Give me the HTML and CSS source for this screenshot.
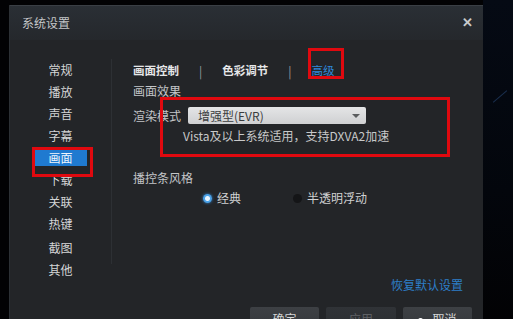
FILE: index.html
```html
<!DOCTYPE html>
<html lang="zh-CN">
<head>
  <meta charset="UTF-8" />
  <meta name="viewport" content="width=device-width, initial-scale=1.0"/>
  <title>系统设置</title>
  <link rel="stylesheet" href="styles.css">
</head>
<body>
  <div class="screen">
    <div class="dialog">
      <div class="titlebar">
        <span class="title">系统设置</span>
        <span class="close">&#x2715;</span>
      </div>
      <div class="main">
        <ul class="sidebar">
          <li>常规</li>
          <li>播放</li>
          <li>声音</li>
          <li>字幕</li>
          <li class="active"><span>画面</span></li>
          <li>下载</li>
          <li>关联</li>
          <li>热键</li>
          <li class="gap">截图</li>
          <li>其他</li>
        </ul>
        <div class="content">
          <div class="tabs">
            <span class="tab">画面控制</span>
            <span class="sep">|</span>
            <span class="tab">色彩调节</span>
            <span class="sep">|</span>
            <span class="tab current">高级</span>
          </div>
          <div class="section">画面效果</div>
          <div class="field">
            <span class="label">渲染模式</span>
            <div class="select">
              <span>增强型(EVR)</span>
              <span class="arrow"></span>
            </div>
          </div>
          <div class="hint">Vista及以上系统适用，支持DXVA2加速</div>
          <div class="section bar-style">播控条风格</div>
          <div class="radios">
            <label class="radio checked"><i></i>经典</label>
            <label class="radio"><i></i>半透明浮动</label>
          </div>
          <div class="spacer"></div>
          <a class="reset">恢复默认设置</a>
          <div class="buttons">
            <button>确定</button>
            <button class="disabled">应用</button>
            <button class="cancel"><b></b>取消</button>
          </div>
        </div>
      </div>
    </div>
    <div class="backdrop"><span class="streak"></span></div>

    <!-- red annotation frames drawn over the screenshot -->
    <div class="mark mark-tab"></div>
    <div class="mark mark-nav"></div>
    <div class="mark mark-render"></div>
  </div>
</body>
</html>
```

FILE: styles.css
```css
body {
  margin: 0;
  background-color: #000;
  font-family: "Noto Sans CJK SC", "Noto Sans", sans-serif;
  font-size: 12px;
  color: #cfd0d1;
  overflow: hidden;
}

.screen {
  position: relative;
  display: flex;
  height: 319px;
  overflow: hidden;
  background-color: #020204;
}

.dialog {
  width: 473px;
  margin: 5px 0 0 10px;
  flex-shrink: 0;
  display: flex;
  flex-direction: column;
  background-color: #232528;
  border-top: 1px solid #3a3f45;
  box-shadow: -1px 0 0 #2c3035, 1px 0 0 #2c3035;
}

.backdrop {
  position: relative;
  flex: 1;
  background: linear-gradient(180deg, #050a14 0%, #03060c 60%, #020204 100%);
}

.streak {
  position: absolute;
  left: 8px;
  top: 96px;
  width: 18px;
  height: 1px;
  background-color: #1a2f4e;
  transform: rotate(-40deg);
}

.titlebar {
  flex-shrink: 0;
  height: 34px;
  display: flex;
  align-items: center;
  justify-content: space-between;
  padding: 0 10px 0 12px;
  background: linear-gradient(180deg, #2a2f35 0%, #25282c 100%);
}

.title {
  color: #c4c6c8;
  font-size: 12px;
  margin-top: -2px;
}

.close {
  color: #c8cacc;
  font-size: 13px;
  font-weight: bold;
  margin-top: -4px;
}

.main {
  flex: 1;
  min-height: 0;
  display: flex;
  align-items: flex-start;
}

.sidebar {
  flex-shrink: 0;
  list-style: none;
  margin: 19px 0 0;
  padding: 0;
  width: 101px;
  height: 205px;
  border-right: 1px solid #2d3034;
}

.sidebar li {
  height: 22px;
  line-height: 22px;
  text-align: center;
  color: #d4d5d6;
}

.sidebar li.gap {
  margin-top: 2px;
}

.sidebar li.active span {
  display: inline-block;
  width: 52px;
  height: 16px;
  line-height: 16px;
  margin-top: 3px;
  background-color: #1f7ad0;
  color: #eef5fc;
  vertical-align: top;
}

.content {
  flex: 1;
  display: flex;
  flex-direction: column;
  padding: 20px 11px 0 21px;
}

.tabs {
  display: flex;
  align-items: center;
  height: 20px;
}

.tab {
  color: #e6e7e8;
  font-weight: bold;
  font-size: 11.5px;
}

.tab.current {
  color: #2f89dc;
  font-weight: normal;
}

.sep {
  color: #9a9c9e;
  margin: 0 20px;
}

.section {
  margin-top: 1px;
  line-height: 20px;
  color: #c4c6c8;
}

.field {
  display: flex;
  align-items: center;
  margin-top: 6px;
  height: 17px;
}

.label {
  width: 55px;
  color: #c4c6c8;
}

.select {
  width: 162px;
  height: 17px;
  display: flex;
  align-items: center;
  justify-content: space-between;
  padding: 0 6px 0 10px;
  border-radius: 2px;
  background: linear-gradient(180deg, #e4e5e6 0%, #cfd0d2 100%);
  color: #3a3c3e;
}

.arrow {
  width: 0;
  height: 0;
  border-left: 4px solid transparent;
  border-right: 4px solid transparent;
  border-top: 4px solid #5a5c5e;
}

.hint {
  margin-top: 4px;
  padding-left: 50px;
  line-height: 16px;
  color: #c8c9ca;
}

.bar-style {
  margin-top: 25px;
  line-height: 18px;
}

.radios {
  display: flex;
  margin-top: 2px;
  line-height: 18px;
  padding-left: 70px;
}

.radio {
  display: flex;
  align-items: center;
  color: #d0d1d2;
  width: 90px;
}

.radio i {
  width: 9px;
  height: 9px;
  border-radius: 50%;
  margin-right: 5px;
  background-color: #141517;
}

.radio.checked i {
  background: radial-gradient(circle, #e8f4ff 0 2px, #4aa2e8 3px);
  box-shadow: 0 0 3px #2f89dc;
}

.spacer {
  height: 70px;
}

.reset {
  align-self: flex-end;
  margin-right: 9px;
  line-height: 16px;
  color: #2d7fc8;
}

.buttons {
  display: flex;
  justify-content: flex-end;
  gap: 7px;
  margin-top: 14px;
}

.buttons button {
  width: 69px;
  height: 24px;
  padding: 0;
  border: none;
  border-radius: 2px;
  background: linear-gradient(180deg, #3d4044 0%, #34373b 100%);
  color: #d4d5d6;
  font-family: inherit;
  font-size: 12px;
  line-height: 24px;
}

.buttons button.disabled {
  width: 70px;
  background: linear-gradient(180deg, #303337 0%, #2b2e31 100%);
  color: #5e6064;
}

.buttons button.cancel b {
  display: inline-block;
  width: 5px;
  height: 5px;
  border-radius: 50%;
  background-color: #fff;
  margin-right: 9px;
  vertical-align: middle;
}

.mark {
  position: absolute;
  border: 3px solid #e0090f;
  box-sizing: border-box;
}

.mark-tab {
  left: 308px;
  top: 48px;
  width: 36px;
  height: 31px;
}

.mark-nav {
  left: 32px;
  top: 147px;
  width: 61px;
  height: 30px;
}

.mark-render {
  left: 160px;
  top: 97px;
  width: 290px;
  height: 60px;
}
```
